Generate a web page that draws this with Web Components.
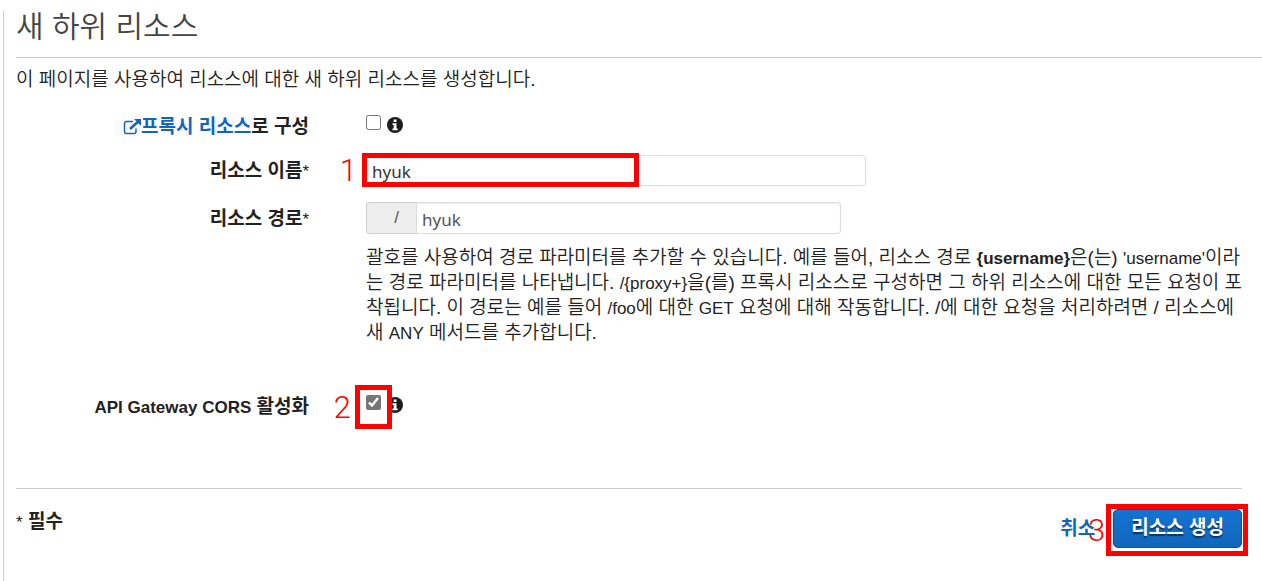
<!DOCTYPE html>
<html lang="ko">
<head>
<meta charset="utf-8">
<title>새 하위 리소스</title>
<style>
    body {
        margin: 0;
        background: #fff;
        color: #222;
        font: 350 19px/25px "Liberation Sans", "Noto Sans CJK KR", sans-serif;
    }
</style>
</head>
<body>
<resource-page></resource-page>

<script>
// Base class: clones a template string into an open shadow root
class BaseElement extends HTMLElement {
    constructor() {
        super();
        this.attachShadow({ mode: 'open' });
        const template = document.createElement('template');
        template.innerHTML = this.constructor.markup;
        this.shadowRoot.appendChild(template.content.cloneNode(true));
    }
}

// info-icon.js
class InfoIcon extends BaseElement {
    static markup = `
        <style>
            :host { display: inline-flex; }
            svg { width: 16px; height: 16px; }
        </style>
        <svg viewBox="0 0 16 16" role="img" aria-label="정보">
            <circle cx="8" cy="8" r="8" fill="#1c1c1c"/>
            <path d="M6.6 2.6h2.9v2.5H6.6zM5.5 6.3h4v5.2h1.2v1.7H5.5v-1.7h1.2V8H5.5z" fill="#fff"/>
        </svg>
    `;
}
customElements.define('info-icon', InfoIcon);

// step-mark.js
// Red frame with a step number, drawn over the slotted content
class StepMark extends BaseElement {
    static markup = `
        <style>
            :host {
                display: block;
                position: relative;
            }
            .frame {
                position: absolute;
                inset: var(--mark-inset, -5px);
                width: var(--mark-width, auto);
                box-sizing: border-box;
                border: 5px solid #f00;
                pointer-events: none;
            }
            .number {
                position: absolute;
                right: calc(100% + var(--mark-gap, 10px));
                top: 50%;
                transform: translateY(-50%);
                padding-top: 2px;
                font: 300 31px/32px Roboto, sans-serif;
                color: #f00;
            }
        </style>
        <slot></slot>
        <div class="frame"><span class="number"></span></div>
    `;

    connectedCallback() {
        this.shadowRoot.querySelector('.number').textContent = this.getAttribute('step');
    }
}
customElements.define('step-mark', StepMark);

// form-row.js
class FormRow extends BaseElement {
    static markup = `
        <style>
            :host {
                display: grid;
                grid-template-columns: 293px minmax(0, 1fr);
                column-gap: 57px;
                align-items: center;
            }
            .label {
                text-align: right;
                font-weight: bold;
            }
            .control {
                display: flex;
                align-items: center;
            }
        </style>
        <div class="label"><slot name="label"></slot></div>
        <div class="control"><slot></slot></div>
    `;
}
customElements.define('form-row', FormRow);

// resource-form.js
class ResourceForm extends BaseElement {
    static markup = `
        <style>
            :host { display: block; }
            form-row { margin-bottom: 16px; }
            .latin {
                font-size: 17px;
                line-height: 1;
            }
            .required {
                font-size: 17px;
                line-height: 1;
                font-weight: normal;
            }
            a {
                color: #1166bb;
                text-decoration: none;
            }
            a svg {
                width: 18px;
                height: 16px;
                vertical-align: -2px;
            }
            input[type="checkbox"] {
                width: 15px;
                height: 15px;
                margin: 0 0 8px;
                accent-color: #767676;
                display: block;
            }
            info-icon { margin: 0 0 4px 6px; }
            input[type="text"] {
                box-sizing: border-box;
                width: 100%;
                height: 31px;
                padding: 2px 5px 0;
                border: 1px solid #ddd;
                border-radius: 4px;
                background: #fff;
                color: #333;
                font: 17px/24px "Noto Sans", sans-serif;
                display: block;
            }
            .name {
                flex: 0 1 500px;
                --mark-inset: -2px auto -1px -4px;
                --mark-width: 277px;
            }
            .path {
                display: flex;
                flex: 0 1 475px;
            }
            .addon {
                box-sizing: border-box;
                flex: none;
                width: 51px;
                padding: 2px 10px 0 20px;
                border: 1px solid #ccc;
                border-right-color: #ddd;
                border-radius: 4px 0 0 4px;
                background: #eee;
                color: #555;
                text-align: center;
                font-size: 17px;
            }
            .path input[type="text"] {
                height: 32px;
                border-left: 0;
                border-radius: 0 4px 4px 0;
                box-shadow: inset 0 1px 1px rgba(0, 0, 0, .08);
                color: #555;
            }
            .help {
                margin: -5px 12px 0 350px;
            }
            .cors {
                margin-top: 49px;
                --mark-inset: -10px -11px -11px;
                --mark-gap: 9px;
            }
        </style>
        <form-row>
            <label slot="label" for="proxy"><a href="#proxy"><svg viewBox="0 0 18 16" fill="none" stroke="#1166bb">
                <path d="M10 2.5H3.5a2 2 0 0 0-2 2v8a2 2 0 0 0 2 2H11a2 2 0 0 0 2-2V9.5" stroke-width="1.5"/>
                <path d="M7 10L15 2.8" stroke-width="2.6"/>
                <path d="M11 0h7v7z" fill="#1166bb" stroke="none"/>
            </svg>프록시 리소스</a>로 구성</label>
            <input type="checkbox" id="proxy">
            <info-icon></info-icon>
        </form-row>
        <form-row>
            <label slot="label" for="name">리소스 이름<span class="required">*</span></label>
            <step-mark class="name" step="1"><input type="text" id="name" value="hyuk"></step-mark>
        </form-row>
        <form-row>
            <label slot="label" for="path">리소스 경로<span class="required">*</span></label>
            <div class="path"><span class="addon">/</span><input type="text" id="path" value="hyuk"></div>
        </form-row>
        <p class="help">괄호를 사용하여 경로 파라미터를 추가할 수 있습니다. 예를 들어, 리소스 경로 <b class="latin">{username}</b>은(는) <span class="latin">'username'</span>이라는 경로 파라미터를 나타냅니다. <span class="latin">/{proxy+}</span>을(를) 프록시 리소스로 구성하면 그 하위 리소스에 대한 모든 요청이 포착됩니다. 이 경로는 예를 들어 <span class="latin">/foo</span>에 대한 <span class="latin">GET</span> 요청에 대해 작동합니다. /에 대한 요청을 처리하려면 / 리소스에 새 <span class="latin">ANY</span> 메서드를 추가합니다.</p>
        <form-row class="cors">
            <label slot="label" for="cors"><span class="latin">API Gateway CORS</span> 활성화</label>
            <step-mark step="2"><input type="checkbox" id="cors" checked></step-mark>
            <info-icon></info-icon>
        </form-row>
    `;
}
customElements.define('resource-form', ResourceForm);

// form-footer.js
class FormFooter extends BaseElement {
    static markup = `
        <style>
            :host {
                display: flex;
                justify-content: space-between;
                align-items: flex-start;
                margin-right: 20px;
                padding-top: 20px;
                border-top: 1px solid #ccc;
                font-weight: bold;
            }
            .required span { font-weight: normal; font-size: 17px; line-height: 1; }
            .actions {
                display: flex;
                align-items: center;
                gap: 18px;
                --mark-inset: -5px -6px -8px -7px;
                --mark-gap: 6px;
            }
            a {
                color: #1166bb;
                text-decoration: none;
            }
            button {
                display: block;
                height: 39px;
                padding: 0 17px 2px;
                border: 1px solid #0d4f94;
                border-radius: 5px;
                background: linear-gradient(#1473d2, #1166bb);
                color: #fff;
                font: inherit;
                text-shadow: 0 2px 1px rgba(0, 0, 0, .5);
            }
        </style>
        <div class="required"><span>*</span> 필수</div>
        <div class="actions">
            <a href="#cancel">취소</a>
            <step-mark step="3"><button type="button">리소스 생성</button></step-mark>
        </div>
    `;
}
customElements.define('form-footer', FormFooter);

// resource-page.js
class ResourcePage extends BaseElement {
    static markup = `
        <style>
            :host {
                display: block;
                box-sizing: border-box;
                min-height: calc(100vh - 11px);
                margin: 11px 0 0 3px;
                padding-left: 12px;
                border-left: 1px solid #ccc;
            }
            h1 {
                margin: 0;
                padding: 0 0 14px;
                border-bottom: 1px solid #ccc;
                color: #444;
                font-size: 30px;
                line-height: 32px;
                font-weight: 350;
            }
            p { margin: 9px 0 22px; }
            form-footer { margin-top: 69px; }
        </style>
        <h1>새 하위 리소스</h1>
        <p>이 페이지를 사용하여 리소스에 대한 새 하위 리소스를 생성합니다.</p>
        <resource-form></resource-form>
        <form-footer></form-footer>
    `;
}
customElements.define('resource-page', ResourcePage);
</script>
</body>
</html>
